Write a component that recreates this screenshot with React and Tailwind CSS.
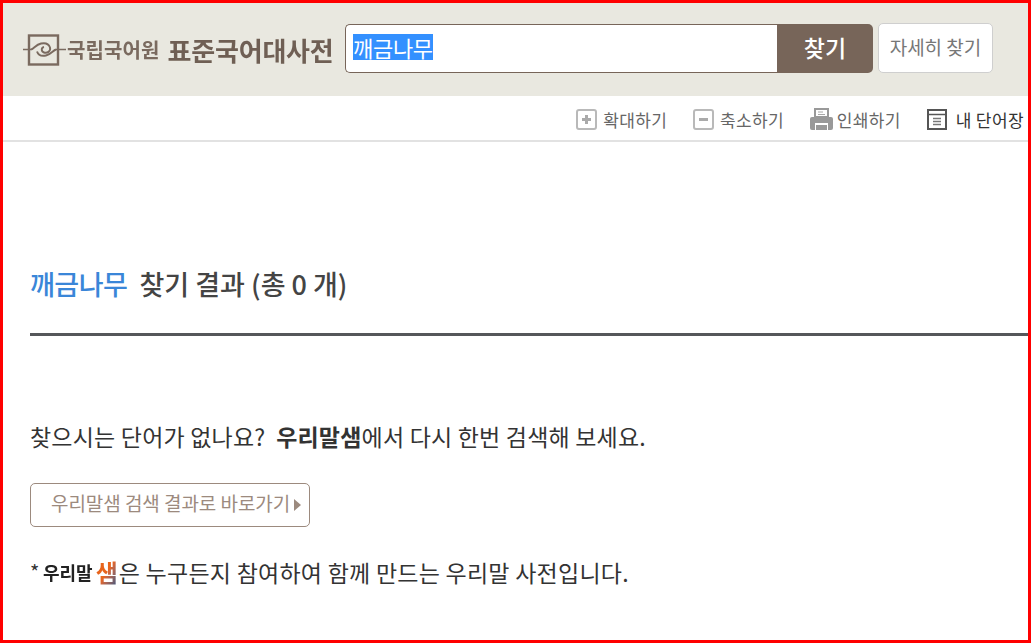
import React from "react";

const font = { fontFamily: '"Noto Sans CJK KR", "Noto Sans", sans-serif' };

function Logo() {
  return (
    <div className="flex items-center w-[322px] shrink-0 mt-[1px]">
      <svg width="44" height="32" viewBox="0 0 44 32" className="shrink-0" fill="none" stroke="#7a6a5f">
        <rect x="6" y="1.5" width="29" height="29" strokeWidth="2.4" />
        <path d="M0 15.5h8M33 15.5h10" strokeWidth="1.4" />
        <path d="M8 15.5c3-1 5-5 10-6 5-1 8 1 9 4 1 4-3 6-6 5-3-1-3-5 0-5.500" strokeWidth="1.9" />
        <path d="M33 15.500c-3 1-5 5-10 6-5 1-8-1-9-4" strokeWidth="1.9" />
      </svg>
      <span className="text-[20px] font-bold tracking-[0.1px] text-[#7a6a5f] whitespace-nowrap leading-none blur-[0.4px]">국립국어원</span>
      <span className="ml-[8px] text-[26px] font-bold tracking-[-0.2px] text-[#6f5f54] whitespace-nowrap leading-none blur-[0.4px]">표준국어대사전</span>
    </div>
  );
}

function ToolItem({ icon, label, dark, gap }) {
  return (
    <div className={`flex items-center pt-[2px] ${gap}`}>
      {icon}
      <span className={`text-[17px] leading-none whitespace-nowrap ${dark ? "text-[#333333] tracking-[0.4px]" : "text-[#666666] tracking-[0.3px]"}`}>{label}</span>
    </div>
  );
}

function SquareIcon({ plus }) {
  return (
    <span className="relative w-[21px] h-[21px] rounded-[3px] border-2 border-[#b9b9b9] bg-white shrink-0">
      <span className="absolute left-[4px] top-[7px] w-[9px] h-[3px] bg-[#aaaaaa]" />
      {plus && <span className="absolute left-[7px] top-[4px] w-[3px] h-[9px] bg-[#aaaaaa]" />}
    </span>
  );
}

function PrintIcon() {
  return (
    <svg width="23" height="22" viewBox="0 0 23 22" className="shrink-0">
      <path d="M5 1h13v8H5z" fill="#fff" stroke="#999999" strokeWidth="2" />
      <path d="M8 4h5M8 6.5h7" stroke="#a8a8a8" strokeWidth="1" />
      <path d="M2 9h19a2 2 0 0 1 2 2v9a2 2 0 0 1-2 2H2a2 2 0 0 1-2-2v-9a2 2 0 0 1 2-2z" fill="#999999" />
      <path d="M5 15h13v7H5z" fill="#fff" />
      <path d="M6 17h11v5H6z" fill="#999999" />
    </svg>
  );
}

function WordbookIcon() {
  return (
    <svg width="20" height="21" viewBox="0 0 20 21" className="shrink-0" fill="none">
      <rect x="1" y="1" width="18" height="19" stroke="#555555" strokeWidth="2" />
      <path d="M1 5.5h18" stroke="#555555" strokeWidth="1.5" />
      <path d="M6 9.5h8M6 12.5h8M6 15.5h8" stroke="#777777" strokeWidth="1.4" />
    </svg>
  );
}

export default function App() {
  return (
    <div style={font} className="w-[1031px] h-[643px] overflow-hidden border-[3px] border-[#ff0000] bg-white flex flex-col">
      <header className="h-[93px] shrink-0 bg-[#e9e8e0] flex items-center pl-[20px]">
        <Logo />
        <div className="w-[528px] h-[49px] flex mt-[-3px]">
          <div className="flex-1 bg-white border border-[#776559] border-r-0 rounded-l-[5px] flex items-center pl-[7px]">
            <span className="bg-[#3390ff] text-white text-[22px] tracking-[-0.3px] leading-[26px] h-[26px] block mt-[-2px]">깨금나무</span>
          </div>
          <div className="w-[96px] bg-[#776559] rounded-r-[5px] flex items-center justify-center text-white text-[23px] font-medium pb-[2px]">찾기</div>
        </div>
        <div className="ml-[5px] mt-[-3px] w-[115px] h-[50px] bg-white border border-[#cfcfcf] rounded-[5px] flex items-center justify-center text-[#777777] text-[19px] pb-[2px]">자세히 찾기</div>
      </header>
      <nav className="h-[46px] shrink-0 border-b-2 border-[#e2e2e2] flex items-center justify-end gap-[26px] pr-[4px]">
        <ToolItem icon={<SquareIcon plus />} label="확대하기" gap="gap-[6px]" />
        <ToolItem icon={<SquareIcon />} label="축소하기" gap="gap-[6px]" />
        <ToolItem icon={<PrintIcon />} label="인쇄하기" gap="gap-[4px]" />
        <ToolItem icon={<WordbookIcon />} label="내 단어장" gap="gap-[9px]" dark />
      </nav>
      <main className="flex-1 pl-[27px]">
        <h1 className="mt-[123px] h-[38px] text-[27px] font-medium leading-[38px] text-[#444444] whitespace-pre">
          <span className="text-[#3a86d8] tracking-[-0.5px]">깨금나무</span>
          {"  찾기 결과 (총 0 개)"}
        </h1>
        <div className="mt-[30px] h-[3px] bg-[#55575a]" />
        <p className="mt-[84px] text-[23px] tracking-[0.2px] leading-[32px] text-[#333333] whitespace-pre">
          {"찾으시는 단어가 없나요?  "}<strong className="font-bold">우리말샘</strong>에서 다시 한번 검색해 보세요.
        </p>
        <div className="mt-[31px] w-[280px] h-[44px] border border-[#9c8a7e] rounded-[5px] flex items-center pl-[20px] pb-[3px] text-[#9c8a7e] text-[19px] tracking-[-0.05px] whitespace-nowrap">
          우리말샘 검색 결과로 바로가기
          <span className="ml-[4px] mt-[2px] w-0 h-0 border-y-[6px] border-y-transparent border-l-[7px] border-l-[#9c8a7e]" />
        </div>
        <p className="mt-[29px] text-[23px] tracking-[0.25px] leading-[32px] text-[#333333] whitespace-pre flex items-center">
          <span className="text-[20px] w-[13px]">*</span>
          <span className="text-[18px] font-bold text-[#222222] tracking-[0px] blur-[0.4px]">우리말</span>
          <span className="text-[24px] font-bold tracking-[-1px] ml-[3px] mr-[2px] blur-[0.3px] bg-gradient-to-br from-[#e8641b] via-[#e8641b] to-[#1f4d80] bg-clip-text text-transparent">샘</span>
          은 누구든지 참여하여 함께 만드는 우리말 사전입니다.
        </p>
      </main>
    </div>
  );
}
